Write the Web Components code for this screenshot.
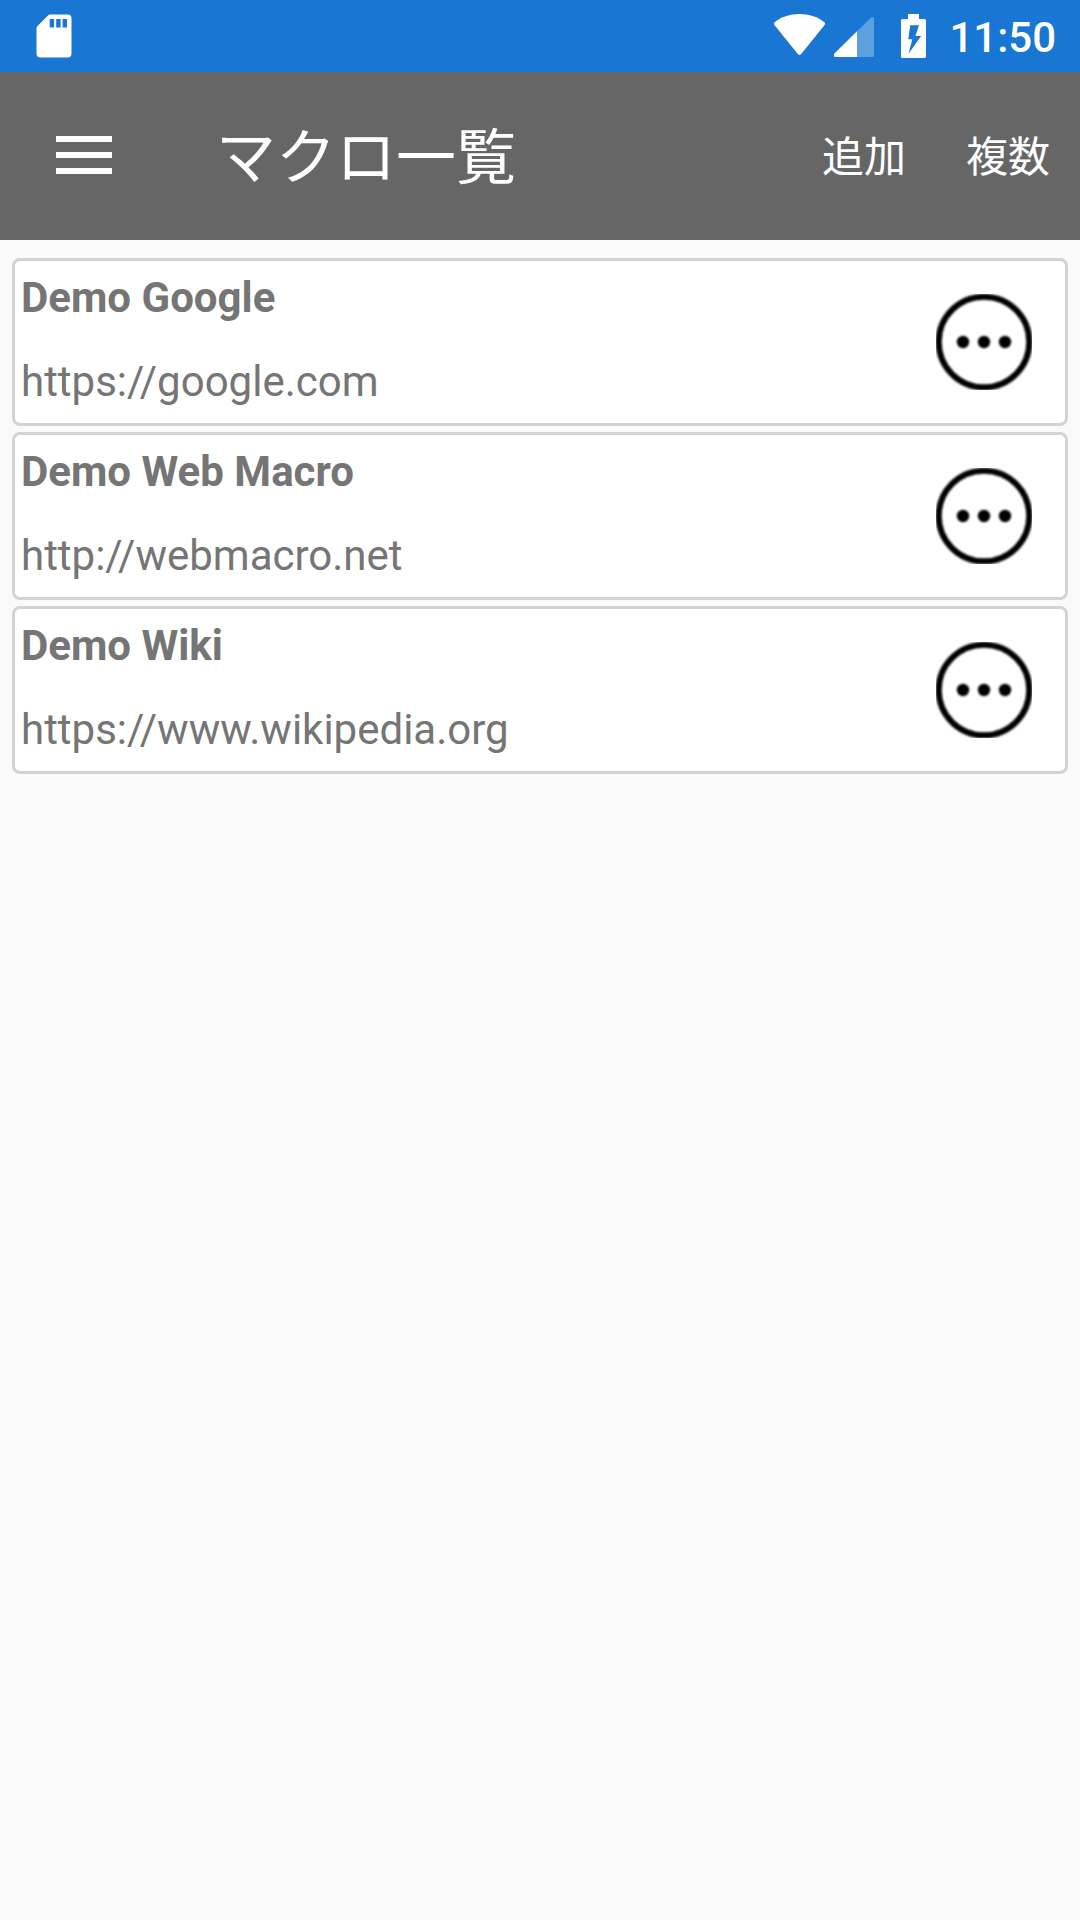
<!DOCTYPE html>
<html lang="ja">
<head>
<meta charset="utf-8">
<title>マクロ一覧</title>
<style>
  body {
    margin: 0;
    min-height: 100vh;
    background: #fafafa;
    font-family: Roboto, "Noto Sans CJK JP", sans-serif;
  }
</style>
</head>
<body>
<status-bar time="11:50"></status-bar>
<app-bar>
  マクロ一覧
  <bar-action slot="actions">追加</bar-action>
  <bar-action slot="actions">複数</bar-action>
</app-bar>
<macro-list>
  <macro-card name="Demo Google" url="https://google.com"></macro-card>
  <macro-card name="Demo Web Macro" url="http://webmacro.net"></macro-card>
  <macro-card name="Demo Wiki" url="https://www.wikipedia.org"></macro-card>
</macro-list>

<script>
(function () {
function makeTemplate(html) {
  const template = document.createElement('template');
  template.innerHTML = html;
  return template;
}

const STATUS_BAR = makeTemplate(`
  <style>
    :host {
      display: flex;
      align-items: center;
      box-sizing: border-box;
      height: 72px;
      padding: 0 24px 0 32px;
      background: #1976d2;
      color: #fff;
    }

    svg {
      display: block;
      height: 72px;
      fill: currentColor;
    }

    .system {
      margin-left: auto;
    }

    .time {
      margin-left: 18px;
      font-size: 42px;
      font-weight: 500;
      line-height: 49px;
      padding-top: 2px;
    }
  </style>
  <svg class="card" width="44" viewBox="32 0 44 72">
    <path fill-rule="evenodd" d="M50 14.5H67.5a4 4 0 0 1 4 4V53.5a4 4 0 0 1-4 4H40.5a4 4 0 0 1-4-4V28a3 3 0 0 1 1-2L48 15.4a3 3 0 0 1 2-.9ZM49.7 19v8.5h4.4V19ZM56.2 19v8.5h4.4V19ZM62.6 19v8.5H67V19Z"/>
  </svg>
  <svg class="system" width="161" viewBox="770 0 161 72">
    <path d="M774.4 22.4C781 17 790 14 799.5 14S818 17 824.6 22.4q1 1.3 0 2.6L801.2 54q-1.7 2-3.4 0L774.4 25q-1-1.3 0-2.6Z"/>
    <path d="M857 31.2V57H835.5a1.500 1.500 0 0 1-1.500-1.500V55q0-1 .7-1.700Z"/>
    <path opacity=".3" d="M857 31.200 871 17.800q1-.8 2-.8 1 .2 1 1.500V55.500a1.500 1.500 0 0 1-1.500 1.500H857Z"/>
    <path fill-rule="evenodd" d="M908 14H919V19H924.500a1.500 1.500 0 0 1 1.500 1.500V56.500a1.500 1.500 0 0 1-1.500 1.500H902.500a1.500 1.500 0 0 1-1.500-1.500V20.500a1.500 1.500 0 0 1 1.500-1.500H908ZM910.200 25.300 908.300 39.200H912.300L908.500 53.700 921.200 35.900H915.400L919 25.300Z"/>
  </svg>
  <span class="time"></span>
`);

class StatusBar extends HTMLElement {
  static get observedAttributes() {
    return ['time'];
  }

  constructor() {
    super();
    this.attachShadow({ mode: 'open' });
    this.shadowRoot.appendChild(STATUS_BAR.content.cloneNode(true));
  }

  attributeChangedCallback() {
    this.shadowRoot.querySelector('.time').textContent = this.getAttribute('time') || '';
  }
}

const APP_BAR = makeTemplate(`
  <style>
    :host {
      display: flex;
      align-items: center;
      box-sizing: border-box;
      height: 168px;
      padding: 0 30px 0 56px;
      background: #666;
      color: #fff;
    }

    .menu {
      display: flex;
      flex-direction: column;
      gap: 10px;
      width: 56px;
      margin-bottom: 2px;
    }

    .menu i {
      height: 6px;
      background: currentColor;
    }

    .title {
      flex: 1;
      margin-left: 104px;
      padding-top: 5px;
      font-size: 60px;
      line-height: 88px;
    }

    .actions {
      display: flex;
      gap: 60px;
      padding-top: 4px;
    }
  </style>
  <div class="menu"><i></i><i></i><i></i></div>
  <div class="title"><slot></slot></div>
  <div class="actions"><slot name="actions"></slot></div>
`);

class AppBar extends HTMLElement {
  constructor() {
    super();
    this.attachShadow({ mode: 'open' });
    this.shadowRoot.appendChild(APP_BAR.content.cloneNode(true));
  }
}

const BAR_ACTION = makeTemplate(`
  <style>
    :host {
      display: block;
      font-size: 42px;
      line-height: 62px;
      white-space: nowrap;
    }
  </style>
  <slot></slot>
`);

class BarAction extends HTMLElement {
  constructor() {
    super();
    this.attachShadow({ mode: 'open' });
    this.shadowRoot.appendChild(BAR_ACTION.content.cloneNode(true));
  }
}

const MACRO_LIST = makeTemplate(`
  <style>
    :host {
      display: flex;
      flex-direction: column;
      gap: 6px;
      padding: 18px 12px;
    }
  </style>
  <slot></slot>
`);

class MacroList extends HTMLElement {
  constructor() {
    super();
    this.attachShadow({ mode: 'open' });
    this.shadowRoot.appendChild(MACRO_LIST.content.cloneNode(true));
  }
}

const MACRO_CARD = makeTemplate(`
  <style>
    :host {
      display: flex;
      align-items: center;
      justify-content: space-between;
      box-sizing: border-box;
      height: 168px;
      padding: 0 33px 0 6px;
      border: 3px solid #d3d3d3;
      border-radius: 8px;
      background: #fff;
      color: #757575;
      font-size: 42px;
      line-height: 49px;
    }

    .text {
      display: flex;
      flex-direction: column;
      gap: 35px;
      margin-bottom: 5px;
    }

    .name {
      font-weight: 700;
    }

    svg {
      display: block;
      overflow: hidden;
    }
  </style>
  <div class="text">
    <span class="name"></span>
    <span class="url"></span>
  </div>
  <svg width="96" height="96" viewBox="0 0 96 96">
    <filter id="soft" x="-10%" y="-10%" width="120%" height="120%" color-interpolation-filters="sRGB">
      <feGaussianBlur stdDeviation="1"/>
    </filter>
    <g filter="url(#soft)">
      <circle cx="48" cy="48" r="45.3" fill="none" stroke="#000" stroke-width="6"/>
      <circle cx="27" cy="48" r="6.2"/>
      <circle cx="48" cy="48" r="6.2"/>
      <circle cx="69" cy="48" r="6.2"/>
    </g>
  </svg>
`);

class MacroCard extends HTMLElement {
  static get observedAttributes() {
    return ['name', 'url'];
  }

  constructor() {
    super();
    this.attachShadow({ mode: 'open' });
    this.shadowRoot.appendChild(MACRO_CARD.content.cloneNode(true));
  }

  attributeChangedCallback() {
    this.shadowRoot.querySelector('.name').textContent = this.getAttribute('name') || '';
    this.shadowRoot.querySelector('.url').textContent = this.getAttribute('url') || '';
  }
}

customElements.define('status-bar', StatusBar);
customElements.define('app-bar', AppBar);
customElements.define('bar-action', BarAction);
customElements.define('macro-list', MacroList);
customElements.define('macro-card', MacroCard);
})();
</script>
</body>
</html>
